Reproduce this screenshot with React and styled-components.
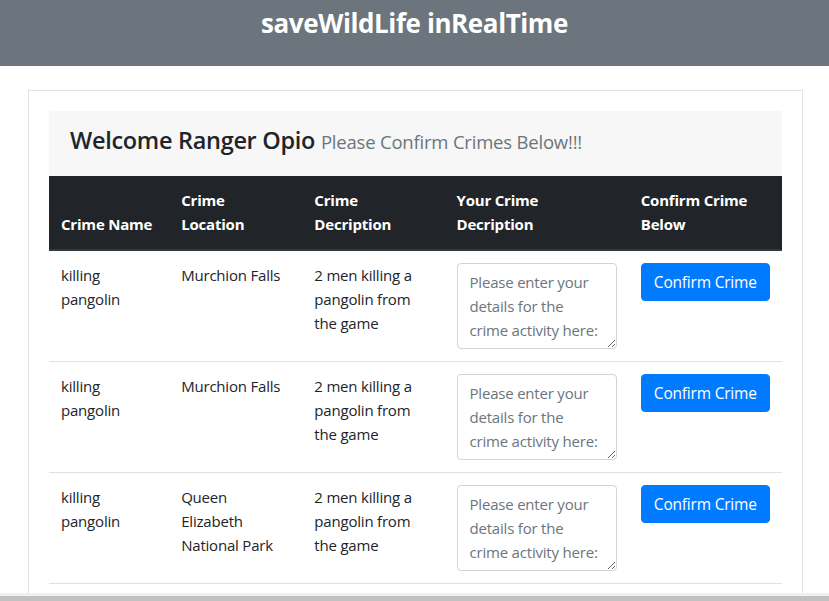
import React from 'react';
import styled, { createGlobalStyle } from 'styled-components';

const GlobalStyle = createGlobalStyle`
  body {
    margin: 0;
    font-family: 'Open Sans', 'Noto Sans', sans-serif;
    color: #212529;
    background: #fff;
    overflow: hidden;
  }
  * { box-sizing: border-box; }
`;

const TopBar = styled.header`
  background-color: #6c757d;
  height: 66px;
  display: flex;
  justify-content: center;
  padding-top: 5px;
`;

const Title = styled.h1`
  margin: 0;
  color: #fff;
  font-size: 26px;
  font-weight: 700;
  line-height: 36px;
  letter-spacing: -0.4px;
`;

const Card = styled.div`
  margin: 24px 26px 0 28px;
  border: 1px solid #dee2e6;
  border-bottom: none;
  padding: 20px 20px 0 20px;
  height: 520px;
`;

const Welcome = styled.div`
  background-color: #f7f7f7;
  height: 65px;
  padding: 0 21px 8px 21px;
  display: flex;
  align-items: center;
  border-radius: 3px 3px 0 0;
`;

const WelcomeText = styled.h3`
  margin: 0;
  font-size: 23.5px;
  font-weight: 600;
  letter-spacing: -0.3px;
  color: #212529;
`;

const Sub = styled.small`
  font-size: 18.5px;
  font-weight: 400;
  color: #6c757d;
  letter-spacing: -0.2px;
`;

const Table = styled.table`
  width: 100%;
  border-collapse: collapse;
  table-layout: fixed;
  font-size: 15px;
  letter-spacing: -0.2px;
`;

const Head = styled.th`
  width: ${p => p.w}px;
  background-color: #212529;
  color: #fff;
  font-weight: 700;
  text-align: left;
  vertical-align: bottom;
  padding: 12px 12px 13px 12px;
  line-height: 24px;
  border-bottom: 2px solid #32383e;
`;

const Row = styled.tr`
  border-bottom: 1px solid #dee2e6;
`;

const Cell = styled.td`
  vertical-align: top;
  padding: 12px;
  line-height: 24px;
  height: 110px;
`;

const Details = styled.textarea`
  display: block;
  width: 160px;
  height: 86px;
  padding: 6px 12px;
  font-family: inherit;
  font-size: 15px;
  letter-spacing: -0.2px;
  line-height: 24px;
  color: #495057;
  border: 1px solid #ced4da;
  border-radius: 4px;
  overflow: hidden;
  &::placeholder { color: #6c757d; }
`;

const ConfirmButton = styled.button`
  background-color: #007bff;
  border: 1px solid #007bff;
  color: #fff;
  font-family: inherit;
  font-size: 15.5px;
  letter-spacing: -0.2px;
  line-height: 24px;
  padding: 6px 12px;
  border-radius: 4px;
  width: 129px;
  height: 38px;
  white-space: nowrap;
  cursor: pointer;
`;

const ScrollStrip = styled.div`
  position: fixed;
  left: 0;
  right: 0;
  bottom: 0;
  height: 8px;
  background: #c1c1c1;
  border-top: 3px solid #f0f0f0;
`;

const crimes = [
  { name: 'killing pangolin', location: 'Murchion Falls', desc: '2 men killing a pangolin from the game' },
  { name: 'killing pangolin', location: 'Murchion Falls', desc: '2 men killing a pangolin from the game' },
  { name: 'killing pangolin', location: 'Queen Elizabeth National Park', desc: '2 men killing a pangolin from the game' },
];

const App = () => {
  return (
    <>
      <GlobalStyle />
      <TopBar>
        <Title>saveWildLife inRealTime</Title>
      </TopBar>
      <Card>
        <Welcome>
          <WelcomeText>
            Welcome Ranger Opio <Sub>Please Confirm Crimes Below!!!</Sub>
          </WelcomeText>
        </Welcome>
        <Table>
          <thead>
            <tr>
              <Head w={120}>Crime Name</Head>
              <Head w={133}>Crime Location</Head>
              <Head w={142}>Crime Decription</Head>
              <Head w={184}>Your Crime Decription</Head>
              <Head w={153}>Confirm Crime Below</Head>
            </tr>
          </thead>
          <tbody>
            {crimes.map((c, i) => (
              <Row key={i}>
                <Cell>{c.name}</Cell>
                <Cell>{c.location}</Cell>
                <Cell>{c.desc}</Cell>
                <Cell>
                  <Details placeholder="Please enter your details for the crime activity here:" />
                </Cell>
                <Cell>
                  <ConfirmButton>Confirm Crime</ConfirmButton>
                </Cell>
              </Row>
            ))}
          </tbody>
        </Table>
      </Card>
      <ScrollStrip />
    </>
  );
};

export default App;
